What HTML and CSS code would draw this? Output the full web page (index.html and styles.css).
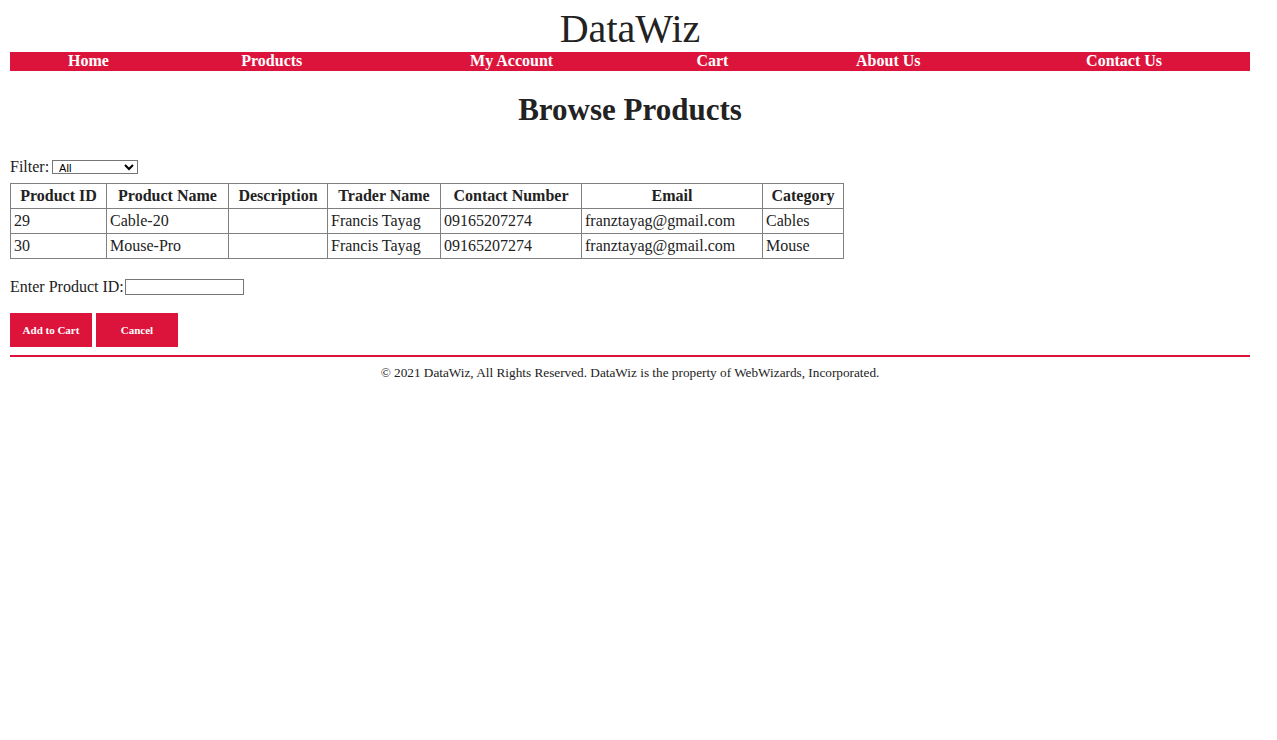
FILE: index.html
```html
<!DOCTYPE html>
<html>
<head>
<meta charset="utf-8">
<title>DataWiz - Browse Products</title>
<link rel="stylesheet" href="styles.css">
</head>
<body>
<div class="page">
  <header class="site-header">
    <div class="logo">DataWiz</div>
    <nav class="nav">
      <a href="#">Home</a>
      <a href="#">Products</a>
      <a href="#">My Account</a>
      <a href="#">Cart</a>
      <a href="#">About Us</a>
      <a href="#">Contact Us</a>
    </nav>
  </header>

  <main class="content">
    <h1 class="page-title">Browse Products</h1>

    <div class="filter-row">
      <label for="filter">Filter:</label>
      <select id="filter" class="filter-select">
        <option>All</option>
        <option>Cables</option>
        <option>Mouse</option>
      </select>
    </div>

    <table class="products">
      <colgroup>
        <col class="col-id">
        <col class="col-name">
        <col class="col-desc">
        <col class="col-trader">
        <col class="col-contact">
        <col class="col-email">
        <col class="col-cat">
      </colgroup>
      <thead>
        <tr>
          <th>Product ID</th>
          <th>Product Name</th>
          <th>Description</th>
          <th>Trader Name</th>
          <th>Contact Number</th>
          <th>Email</th>
          <th>Category</th>
        </tr>
      </thead>
      <tbody>
        <tr>
          <td>29</td>
          <td>Cable-20</td>
          <td></td>
          <td>Francis Tayag</td>
          <td>09165207274</td>
          <td>franztayag@gmail.com</td>
          <td>Cables</td>
        </tr>
        <tr>
          <td>30</td>
          <td>Mouse-Pro</td>
          <td></td>
          <td>Francis Tayag</td>
          <td>09165207274</td>
          <td>franztayag@gmail.com</td>
          <td>Mouse</td>
        </tr>
      </tbody>
    </table>

    <div class="id-row">
      <label for="pid">Enter Product ID:</label>
      <input id="pid" type="text" class="id-input">
    </div>

    <div class="actions">
      <button class="btn">Add to Cart</button>
      <button class="btn">Cancel</button>
    </div>
  </main>

  <footer class="site-footer">
    &copy; 2021 DataWiz, All Rights Reserved. DataWiz is the property of WebWizards, Incorporated.
  </footer>
</div>
</body>
</html>
```

FILE: styles.css
```css
html, body {
  margin: 0;
  padding: 0;
  background: #ffffff;
}

body {
  font-family: "Liberation Serif", "Times New Roman", serif;
  font-size: 16px;
  color: #222222;
}

.page {
  width: 1240px;
  padding: 6px 0 0 10px;
}

.logo {
  text-align: center;
  font-size: 40px;
  line-height: 46px;
  color: #222222;
}

.nav {
  display: grid;
  grid-template-columns: 157fr 210fr 270fr 132fr 220fr 252fr;
  background: #dc143c;
  height: 19px;
  line-height: 17px;
}

.nav a {
  color: #ffffff;
  font-weight: bold;
  text-decoration: none;
  text-align: center;
}

.page-title {
  margin: 20px 0 0;
  text-align: center;
  font-size: 31px;
  line-height: 37px;
  font-weight: bold;
}

.filter-row {
  margin-top: 30px;
  display: flex;
  align-items: center;
  gap: 3px;
  height: 18px;
}

.filter-select {
  width: 86px;
  height: 14px;
  padding: 0 2px;
  font-family: "Liberation Sans", Arial, sans-serif;
  font-size: 11px;
  color: #000;
  border: 1px solid #767676;
  border-radius: 0;
  background: #fff;
}

.products {
  margin-top: 7px;
  border-collapse: collapse;
  table-layout: fixed;
  width: 833px;
}

.col-id { width: 96px; }
.col-name { width: 122px; }
.col-desc { width: 99px; }
.col-trader { width: 113px; }
.col-contact { width: 141px; }
.col-email { width: 181px; }
.col-cat { width: 81px; }

.products th,
.products td {
  border: 1px solid #808080;
  padding: 3px 3px;
  height: 18px;
  line-height: 18px;
  white-space: nowrap;
}

.products th {
  text-align: center;
  font-weight: bold;
}

.products td {
  text-align: left;
}

.id-row {
  margin-top: 19px;
  display: flex;
  align-items: center;
  gap: 1px;
  height: 18px;
}

.id-input {
  width: 115px;
  height: 12px;
  padding: 1px;
  border: 1px solid #767676;
  font-size: 13px;
  font-family: "Liberation Sans", Arial, sans-serif;
}

.actions {
  margin-top: 17px;
  display: flex;
  gap: 4px;
}

.btn {
  width: 82px;
  height: 34px;
  background: #dc143c;
  color: #ffffff;
  border: none;
  font-family: "Liberation Serif", "Times New Roman", serif;
  font-size: 11px;
  font-weight: bold;
  padding: 0;
  cursor: pointer;
}

.site-footer {
  margin-top: 8px;
  border-top: 2px solid #dc143c;
  padding-top: 8px;
  text-align: center;
  font-size: 13.25px;
  line-height: 15px;
}
```
